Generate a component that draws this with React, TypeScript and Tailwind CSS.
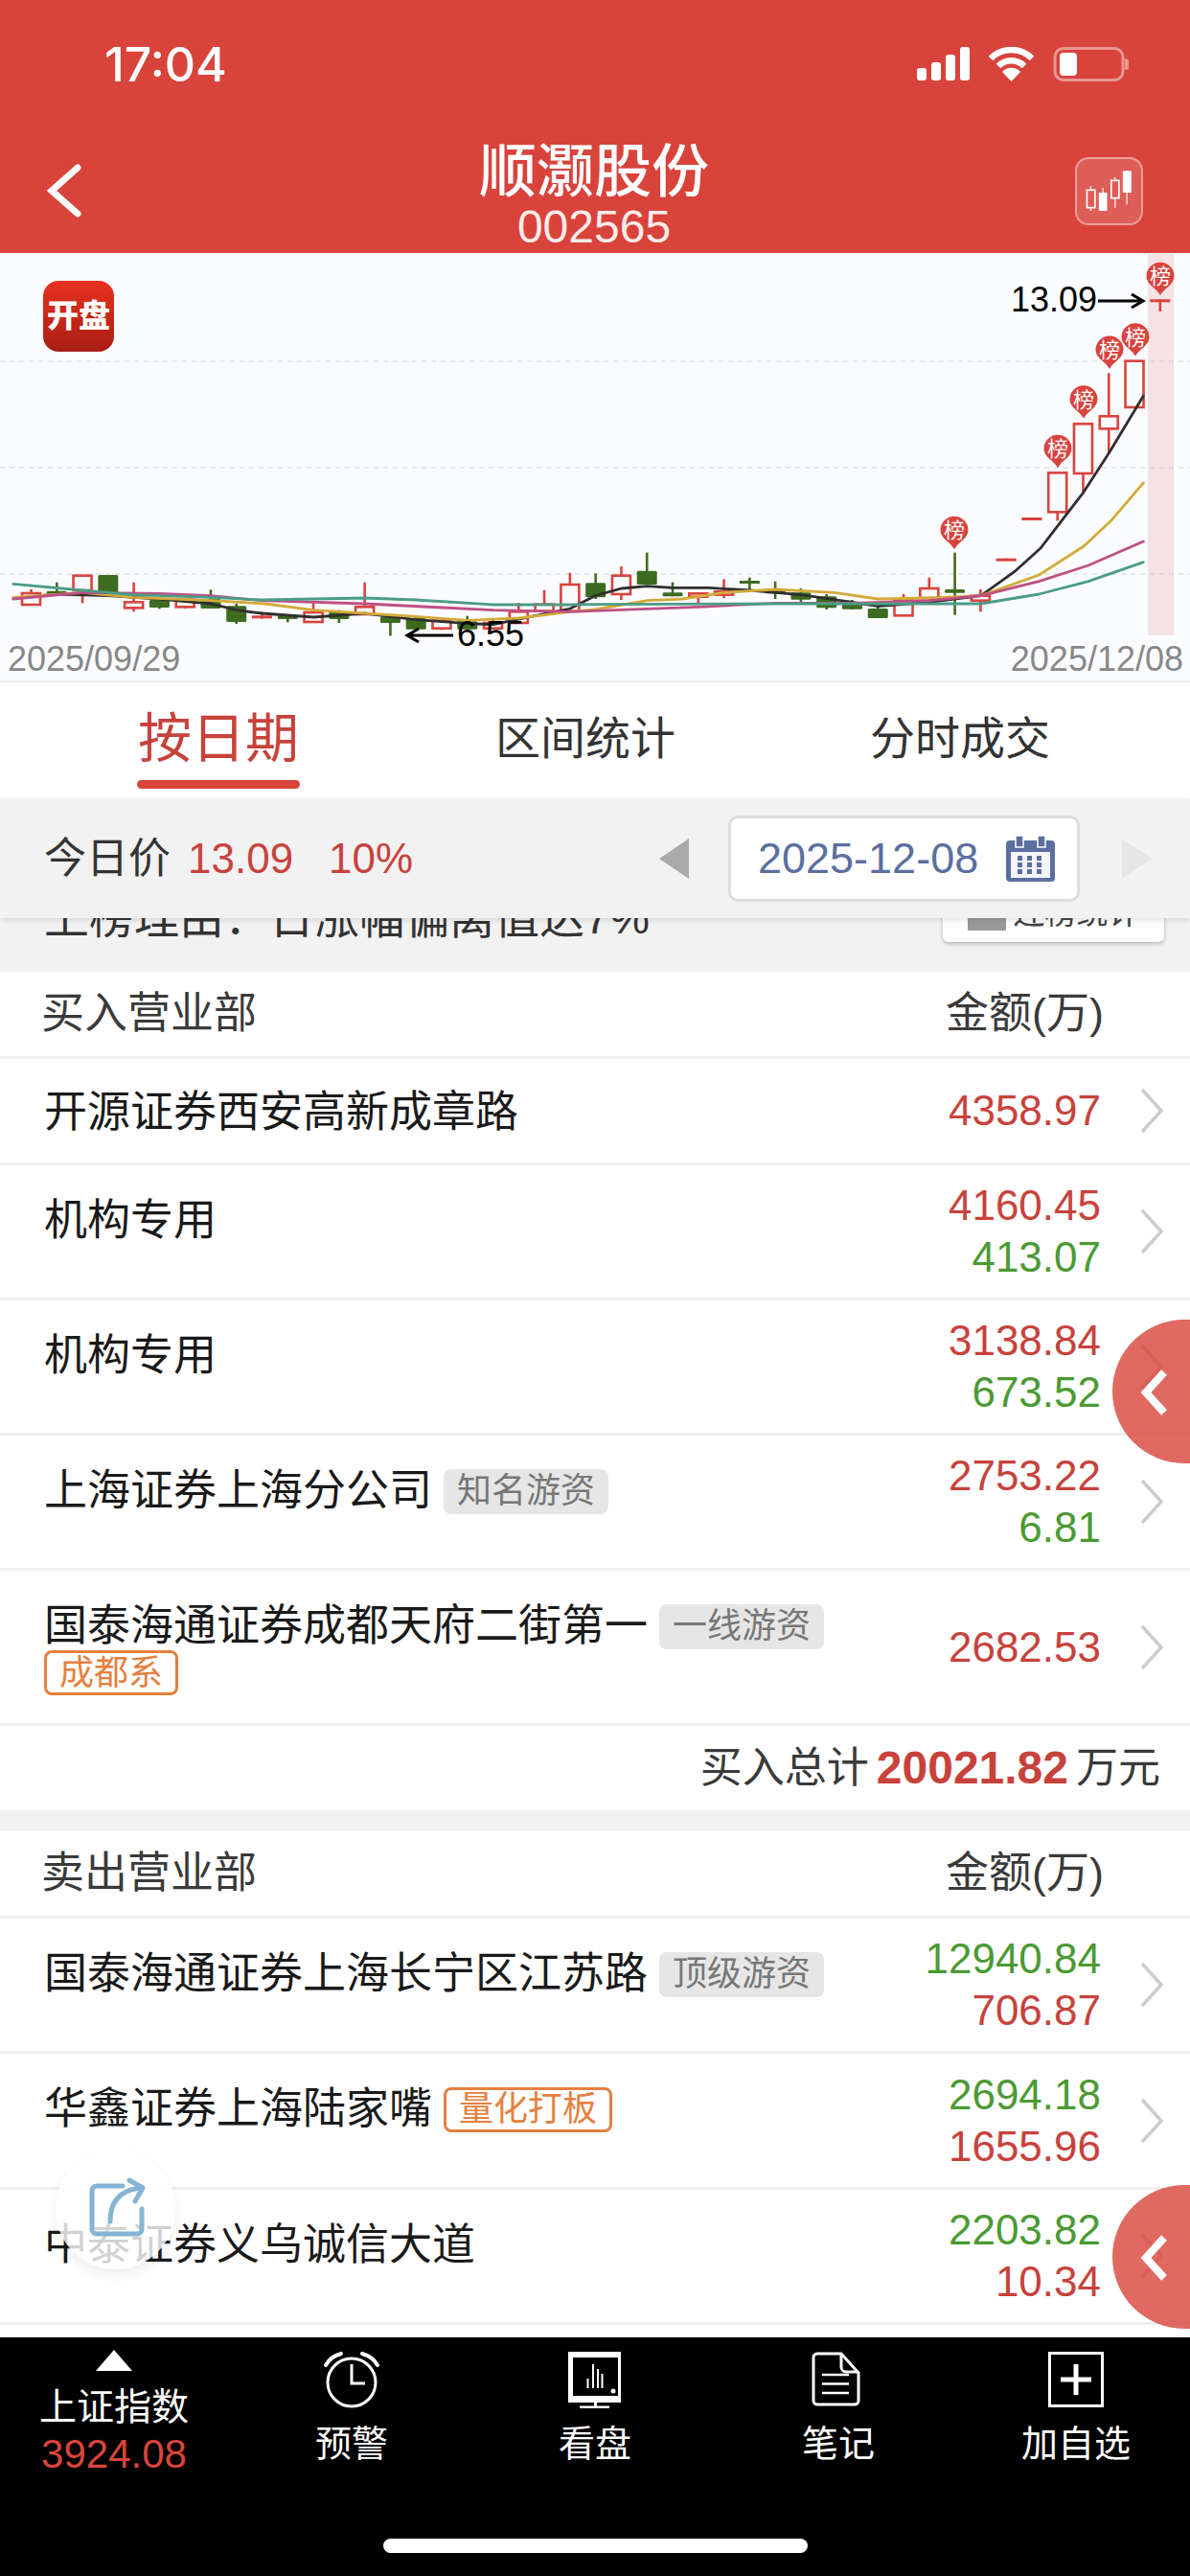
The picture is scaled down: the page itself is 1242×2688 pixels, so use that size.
import type { ReactNode } from 'react'

const RED = '#d9433d'
const GREEN = '#3d6b1f'

// zoomed crop coordinates -> chart coordinates
const lx = (px: number) => px / 2.525
const rx = (px: number) => 621 + px / 2.525
const yy = (py: number) => py / 3 - 4

type Candle = [number, number, number, number, 'r' | 'g']

// body top, body bottom, wick top, wick bottom
const candles: Candle[] = [
  [1077, 1113, 1065, 1115, 'r'],
  [1070, 1080, 1043, 1080, 'g'],
  [1022, 1068, 1022, 1108, 'r'],
  [1020, 1078, 1020, 1083, 'g'],
  [1105, 1123, 1043, 1135, 'r'],
  [1098, 1122, 1098, 1126, 'g'],
  [1097, 1120, 1097, 1125, 'r'],
  [1095, 1125, 1066, 1125, 'g'],
  [1117, 1167, 1110, 1173, 'g'],
  [1147, 1154, 1135, 1157, 'r'],
  [1147, 1158, 1147, 1168, 'g'],
  [1137, 1167, 1108, 1167, 'r'],
  [1135, 1158, 1130, 1170, 'g'],
  [1120, 1143, 1043, 1143, 'r'],
  [1150, 1170, 1145, 1210, 'g'],
  [1155, 1190, 1150, 1190, 'g'],
  [1163, 1187, 1155, 1192, 'r'],
  [1165, 1190, 1148, 1190, 'g'],
  [1170, 1187, 1160, 1190, 'r'],
  [1135, 1170, 1107, 1170, 'r'],
  [1112, 1133, 1067, 1135, 'r'],
  [1050, 1133, 1013, 1133, 'r'],
  [1045, 1090, 1015, 1095, 'g'],
  [1022, 1080, 993, 1098, 'r'],
  [1007, 1050, 950, 1050, 'g'],
  [1075, 1087, 1043, 1087, 'g'],
  [1078, 1088, 1078, 1110, 'r'],
  [1072, 1082, 1033, 1092, 'r'],
  [1038, 1046, 1028, 1072, 'g'],
  [1063, 1078, 1040, 1095, 'g'],
  [1075, 1097, 1062, 1110, 'g'],
  [1087, 1123, 1080, 1128, 'g'],
  [1108, 1127, 1098, 1127, 'g'],
  [1125, 1155, 1115, 1155, 'g'],
  [1097, 1147, 1080, 1147, 'r'],
  [1062, 1092, 1028, 1092, 'r'],
  [1065, 1076, 950, 1145, 'g'],
  [1085, 1100, 1065, 1135, 'r'],
  [968, 974, 968, 974, 'r'],
  [840, 846, 840, 846, 'r'],
  [700, 823, 700, 850, 'r'],
  [547, 702, 547, 762, 'r'],
  [523, 562, 388, 640, 'r'],
  [350, 495, 350, 495, 'r'],
  [157, 163, 157, 195, 'r'],
]

const toPoints = (left: number[][], right: number[][]) =>
  [...left.map(([x, y]) => `${lx(x)},${yy(y)}`), ...right.map(([x, y]) => `${rx(x)},${yy(y)}`)].join(' ')

const lines = [
  {
    color: '#2f2f2f',
    points: toPoints(
      [[35, 1093], [150, 1080], [286, 1085], [420, 1095], [556, 1110], [624, 1130], [690, 1140], [826, 1152], [962, 1140], [1097, 1160], [1233, 1172], [1300, 1175], [1400, 1150], [1503, 1125]],
      [[0, 1085], [70, 1062], [138, 1055], [205, 1060], [300, 1060], [408, 1068], [543, 1082], [678, 1105], [746, 1118], [881, 1105], [1017, 1085], [1105, 1010], [1175, 935], [1288, 760], [1356, 635], [1445, 460]],
    ),
  },
  {
    color: '#d4ab3a',
    points: toPoints(
      [[35, 1090], [218, 1075], [350, 1090], [556, 1100], [700, 1110], [826, 1130], [962, 1140], [1097, 1150], [1233, 1162], [1367, 1155], [1503, 1135]],
      [[0, 1128], [138, 1100], [230, 1095], [340, 1075], [475, 1065], [630, 1075], [746, 1095], [881, 1092], [1017, 1085], [1170, 1020], [1288, 930], [1360, 850], [1445, 732]],
    ),
  },
  {
    color: '#bf4f86',
    points: toPoints(
      [[35, 1095], [218, 1075], [420, 1078], [556, 1085], [690, 1100], [962, 1110], [1165, 1122], [1300, 1130], [1503, 1135]],
      [[0, 1132], [273, 1120], [475, 1108], [678, 1108], [881, 1100], [1017, 1085], [1170, 1040], [1300, 990], [1445, 915]],
    ),
  },
  {
    color: '#4b9c86',
    points: toPoints(
      [[35, 1048], [218, 1068], [350, 1082], [556, 1090], [690, 1098], [962, 1092], [1097, 1098], [1300, 1113], [1503, 1113]],
      [[0, 1112], [475, 1110], [1017, 1110], [1170, 1080], [1300, 1040], [1445, 980]],
    ),
  },
]

// x centre, tip y
const pins = [
  [1211, yy(145)],
  [1185, yy(335)],
  [1158, yy(375)],
  [1131, yy(530)],
  [1104, yy(685)],
  [996, yy(940)],
]

function Chart() {
  return (
    <svg viewBox="0 0 1242 404" className="block h-[404px] w-[1242px] overflow-visible">
      <rect x="1198" y="1" width="27" height="398" fill="#f5e2e4" />
      {[113, 224, 335].map((y) => (
        <line key={y} x1="0" x2="1242" y1={y} y2={y} stroke="#cfd0d4" strokeWidth="1" strokeDasharray="5 5" />
      ))}
      {candles.map(([top, bottom, wickTop, wickBottom, kind], i) => {
        const x = 32.5 + i * 26.78
        const color = kind === 'r' ? RED : GREEN
        const flat = bottom - top < 10
        return (
          <g key={i}>
            <line x1={x} x2={x} y1={yy(wickTop)} y2={yy(wickBottom)} stroke={color} strokeWidth="2.6" />
            {flat ? (
              <rect x={x - 10.5} y={yy(top)} width="21" height="3" fill={color} />
            ) : kind === 'r' ? (
              <rect x={x - 9.5} y={yy(top)} width="19" height={(bottom - top) / 3} fill="#fbfcff" stroke={color} strokeWidth="2.6" />
            ) : (
              <rect x={x - 10.5} y={yy(top)} width="21" height={(bottom - top) / 3} rx="1.5" fill={color} />
            )}
          </g>
        )
      })}
      {lines.map((l) => (
        <polyline key={l.color} points={l.points} fill="none" stroke={l.color} strokeWidth="2.8" strokeLinejoin="round" strokeLinecap="round" />
      ))}
      {pins.map(([x, tip]) => (
        <g key={x}>
          <path
            d={`M${x} ${tip} C${x - 4} ${tip - 8} ${x - 14.5} ${tip - 11} ${x - 14.5} ${tip - 20} A14.5 14.5 0 1 1 ${x + 14.5} ${tip - 20} C${x + 14.5} ${tip - 11} ${x + 4} ${tip - 8} ${x} ${tip} Z`}
            fill={RED}
          />
          <text x={x} y={tip - 12} textAnchor="middle" fontSize="22" fill="#fff">
            榜
          </text>
        </g>
      ))}
      <text x="1055" y="61" fontSize="36" fill="#000">
        13.09
      </text>
      <path d="M1146 50 H1192 M1181 43 L1193 50 L1181 57" fill="none" stroke="#000" strokeWidth="3" />
      <path d="M473 399 H426 M437 392 L425 399 L437 406" fill="none" stroke="#000" strokeWidth="3" />
      <text x="477" y="410" fontSize="36" fill="#000">
        6.55
      </text>
    </svg>
  )
}

function Chevron() {
  return (
    <svg width="26" height="48" viewBox="0 0 26 48" className="shrink-0">
      <path d="M3 2 L23 24 L3 46" fill="none" stroke="#cdcdcd" strokeWidth="3.6" />
    </svg>
  )
}

function Tag({ children, orange }: { children: ReactNode; orange?: boolean }) {
  return orange ? (
    <span className="flex h-[47px] items-center whitespace-nowrap rounded-lg border-[3px] border-[#e5803e] px-[13px] text-[36px] text-[#e5803e]">
      {children}
    </span>
  ) : (
    <span className="flex h-[47px] items-center whitespace-nowrap rounded-lg bg-[#e6e6e6] px-[14px] text-[36px] text-[#777777]">
      {children}
    </span>
  )
}

function Row({
  name,
  tags,
  values,
  height,
  compact,
}: {
  name: string
  tags?: ReactNode
  values: [string, string][]
  height: string
  compact?: boolean
}) {
  return (
    <div className={`flex border-b-[3px] border-[#efefef] pl-[46px] pr-[27px] ${height}`}>
      <div className={`flex min-w-0 flex-1 flex-wrap content-start items-center gap-x-[12px] gap-y-[1px] pr-[30px] ${compact ? 'pt-[32px]' : 'pt-[34px]'}`}>
        <span className="whitespace-nowrap text-[45px] leading-[48px] text-[#1a1a1a]">{name}</span>
        {tags}
      </div>
      <div className="flex flex-col items-end justify-center text-[44px] leading-[54px]">
        {values.map(([v, c]) => (
          <span key={v} className={c === 'r' ? 'text-[#c8423c]' : 'text-[#4b9a33]'}>
            {v}
          </span>
        ))}
      </div>
      <div className="ml-[40px] flex items-center">
        <Chevron />
      </div>
    </div>
  )
}

function SectionHead({ title }: { title: string }) {
  return (
    <div className="flex h-[91px] items-center justify-between border-b-[3px] border-[#efefef] pl-[43px] pr-[90px] text-[45px] text-[#3a3a3a]">
      <span>{title}</span>
      <span>金额(万)</span>
    </div>
  )
}

function RedTab({ top }: { top: string }) {
  return (
    <div className={`absolute left-[1161px] flex h-[150px] w-[152px] rounded-full bg-[#d8433b]/80 ${top}`}>
      <svg width="30" height="48" viewBox="0 0 30 48" className="ml-[28px] mt-[52px]">
        <path d="M26 3 L7 24 L26 45" fill="none" stroke="#fff" strokeWidth="8" />
      </svg>
    </div>
  )
}

function NavItem({ width, label, children }: { width: string; label: string; children: ReactNode }) {
  return (
    <div className={`flex flex-col items-center pt-[14px] ${width}`}>
      <div className="h-[60px]">{children}</div>
      <span className="mt-[15px] text-[38px] leading-[44px] text-white">{label}</span>
    </div>
  )
}

export default function App() {
  return (
    <div className="relative flex h-[2688px] w-[1242px] flex-col overflow-hidden bg-white font-['Liberation_Sans','Noto_Sans_CJK_SC',sans-serif]">
      {/* header */}
      <header className="h-[264px] shrink-0 bg-[#d8433b] text-white">
        <div className="flex h-[134px] items-center pl-[109px] pr-[64px]">
          <span className="font-['Inter'] text-[50px] font-medium">17:04</span>
          <svg width="221" height="36" viewBox="0 0 221 36" className="ml-auto">
            <rect x="0" y="22" width="10" height="13" rx="3" fill="#fff" />
            <rect x="15" y="16" width="10" height="19" rx="3" fill="#fff" />
            <rect x="30" y="8" width="10" height="27" rx="3" fill="#fff" />
            <rect x="45" y="0" width="10" height="35" rx="3" fill="#fff" />
            <path d="M77 12 A30 30 0 0 1 120 12" fill="none" stroke="#fff" strokeWidth="6.5" />
            <path d="M85 20 A19 19 0 0 1 112 20" fill="none" stroke="#fff" strokeWidth="6.5" />
            <path d="M89 26 A13 13 0 0 1 108 26 L98.5 36 Z" fill="#fff" />
            <rect x="144" y="1.5" width="71" height="33" rx="9" fill="none" stroke="#fff" strokeOpacity="0.45" strokeWidth="3" />
            <rect x="149" y="6" width="18" height="24" rx="4" fill="#fff" />
            <path d="M217 12 A6 6 0 0 1 217 24 Z" fill="#fff" fillOpacity="0.45" />
          </svg>
        </div>
        <div className="flex h-[130px] items-center justify-between px-[49px]">
          <div className="w-[69px]">
            <svg width="36" height="56" viewBox="0 0 36 56">
              <path d="M32 4 L5 28 L32 52" fill="none" stroke="#fff" strokeWidth="7" strokeLinecap="round" />
            </svg>
          </div>
          <div className="mt-[14px] flex flex-col items-center self-start">
            <span className="text-[60px] font-medium leading-[64px]">顺灏股份</span>
            <span className="mt-[1px] text-[48px] leading-[48px] text-white/90">002565</span>
          </div>
          <div className="flex h-[71px] w-[71px] items-center justify-center rounded-[14px] border-2 border-white/40 bg-white/15">
            <svg width="71" height="71" viewBox="38 37 212 213" className="shrink-0">
              <path d="M87 127 V205 M125 133 V205 M163 100 V195 M200 80 V185" stroke="#fff" strokeOpacity="0.85" strokeWidth="4" />
              <rect x="75" y="140" width="25" height="55" fill="#e15b55" stroke="#fff" strokeWidth="5" />
              <rect x="112" y="148" width="26" height="57" fill="#fff" />
              <rect x="151" y="110" width="24" height="55" fill="#e15b55" stroke="#fff" strokeWidth="5" />
              <rect x="187" y="80" width="27" height="68" fill="#fff" />
            </svg>
          </div>
        </div>
      </header>

      {/* chart */}
      <section className="relative h-[448px] shrink-0 border-b-2 border-[#ececec] bg-[#fbfcff]">
        <Chart />
        <div className="flex justify-between pl-[8px] pr-[7px] text-[36px] leading-[40px] text-[#888888]">
          <span>2025/09/29</span>
          <span>2025/12/08</span>
        </div>
        <div className="absolute left-[45px] top-[29px] flex h-[74px] w-[74px] items-center justify-center rounded-[16px] bg-gradient-to-b from-[#e8321f] to-[#a81e14] text-[33px] font-black text-white">
          开盘
        </div>
      </section>

      {/* tabs */}
      <div className="flex h-[121px] shrink-0 text-[47px] text-[#333333]">
        <div className="flex w-[456px] flex-col items-center pt-[28px]">
          <span className="text-[56px] leading-[62px] text-[#c8423c]">按日期</span>
          <div className="mt-[12px] h-[9px] w-[170px] rounded-full bg-[#d8433b]" />
        </div>
        <div className="flex w-[310px] flex-col items-center pt-[28px]">
          <span className="leading-[62px]">区间统计</span>
        </div>
        <div className="flex w-[472px] flex-col items-center pt-[28px]">
          <span className="leading-[62px]">分时成交</span>
        </div>
      </div>

      {/* date bar */}
      <div className="relative z-10 flex h-[125px] shrink-0 items-center bg-[#f2f2f2] pl-[46px] pr-[40px] text-[44px] shadow-[0_2px_6px_rgba(0,0,0,0.12)]">
        <span className="text-[#333333]">今日价</span>
        <span className="ml-[18px] text-[#c8423c]">13.09</span>
        <span className="ml-[37px] text-[#c8423c]">10%</span>
        <svg width="31" height="42" viewBox="0 0 31 42" className="ml-auto">
          <path d="M0 21 L31 0 V42 Z" fill="#aaaaaa" />
        </svg>
        <div className="ml-[41px] flex h-[90px] w-[367px] items-center justify-between rounded-[10px] border-[3px] border-[#dddddd] bg-white pl-[28px] pr-[23px] text-[#5a6f9f]">
          <span className="text-[45px]">2025-12-08</span>
          <svg width="51" height="48" viewBox="0 0 51 48">
            <rect x="0" y="5" width="51" height="43" rx="4" fill="#5a6f9f" />
            <rect x="5" y="17" width="41" height="27" fill="#f4f5f9" />
            <rect x="10" y="0" width="8" height="12" fill="#5a6f9f" stroke="#fff" strokeWidth="1.5" />
            <rect x="33" y="0" width="8" height="12" fill="#5a6f9f" stroke="#fff" strokeWidth="1.5" />
            {[12, 22, 32].map((x) =>
              [21, 28, 35].map((y) => <rect key={`${x}-${y}`} x={x} y={y} width="5" height="5" fill="#5a6f9f" />),
            )}
          </svg>
        </div>
        <svg width="31" height="42" viewBox="0 0 31 42" className="ml-[44px]">
          <path d="M31 21 L0 0 V42 Z" fill="#e6e6e6" />
        </svg>
      </div>

      {/* list */}
      <div className="flex-1 overflow-hidden">
        <div className="h-[56px] overflow-hidden bg-[#f2f2f2]">
          <div className="-mt-[35px] flex items-start justify-between pl-[46px] pr-[27px]">
            <span className="mt-[11px] text-[47px] leading-[48px] text-[#333333]">上榜理由：日涨幅偏离值达7%</span>
            <div className="flex h-[60px] w-[231px] items-center justify-center gap-[8px] rounded-b-md bg-white text-[33px] text-[#444444] shadow-[0_2px_4px_rgba(0,0,0,0.25)]">
              <svg width="40" height="36" viewBox="0 0 40 36">
                <rect width="40" height="36" fill="#999999" />
              </svg>
              <span>连榜统计</span>
            </div>
          </div>
        </div>

        <SectionHead title="买入营业部" />
        <Row compact height="h-[111px]" name="开源证券西安高新成章路" values={[['4358.97', 'r']]} />
        <Row height="h-[141px]" name="机构专用" values={[['4160.45', 'r'], ['413.07', 'g']]} />
        <Row height="h-[141px]" name="机构专用" values={[['3138.84', 'r'], ['673.52', 'g']]} />
        <Row height="h-[141px]" name="上海证券上海分公司" tags={<Tag>知名游资</Tag>} values={[['2753.22', 'r'], ['6.81', 'g']]} />
        <Row
          height="h-[162px]"
          name="国泰海通证券成都天府二街第一"
          tags={
            <>
              <Tag>一线游资</Tag>
              <Tag orange>成都系</Tag>
            </>
          }
          values={[['2682.53', 'r']]}
        />
        <div className="flex h-[88px] items-center justify-end gap-[8px] pr-[31px] text-[44px] text-[#3a3a3a]">
          <span>买入总计</span>
          <span className="text-[48px] font-bold text-[#c8423c]">20021.82</span>
          <span>万元</span>
        </div>
        <div className="h-[22px] bg-[#f2f2f2]" />

        <SectionHead title="卖出营业部" />
        <Row height="h-[141px]" name="国泰海通证券上海长宁区江苏路" tags={<Tag>顶级游资</Tag>} values={[['12940.84', 'g'], ['706.87', 'r']]} />
        <Row height="h-[142px]" name="华鑫证券上海陆家嘴" tags={<Tag orange>量化打板</Tag>} values={[['2694.18', 'g'], ['1655.96', 'r']]} />
        <Row height="h-[141px]" name="中泰证券义乌诚信大道" values={[['2203.82', 'g'], ['10.34', 'r']]} />
      </div>

      {/* bottom bar */}
      <nav className="flex h-[249px] shrink-0 flex-col bg-black">
        <div className="flex">
          <div className="flex w-[238px] flex-col items-center pt-[13px]">
            <svg width="38" height="22" viewBox="0 0 38 22">
              <path d="M19 0 L38 22 H0 Z" fill="#fff" />
            </svg>
            <span className="mt-[14px] text-[39px] leading-[48px] text-white">上证指数</span>
            <span className="mt-[1px] text-[42px] leading-[48px] text-[#d9443c]">3924.08</span>
          </div>
          <NavItem width="w-[258px]" label="预警">
            <svg width="60" height="60" viewBox="0 0 60 60" fill="none" stroke="#fff" strokeWidth="3">
              <circle cx="30" cy="33" r="25" />
              <path d="M30 14 V34 H44" />
              <path d="M3 15 Q8 6 19 3 M41 3 Q52 6 57 15" strokeWidth="4" strokeLinecap="round" />
            </svg>
          </NavItem>
          <NavItem width="w-[250px]" label="看盘">
            <svg width="60" height="60" viewBox="0 0 60 60" fill="none">
              <path fillRule="evenodd" clipRule="evenodd" d="M2 1 H57 V54 H2 Z M7 7 V47 H54 V7 Z" fill="#fff" />
              <path d="M30.5 54 V59 M14 59 H45" stroke="#fff" strokeWidth="3" />
              <path d="M22.5 29 V39 M28 14 V39 M33 19 V39 M37.5 24 V39" stroke="#fff" strokeWidth="2" />
              <circle cx="49" cy="42" r="2.5" fill="#fff" />
            </svg>
          </NavItem>
          <NavItem width="w-[258px]" label="笔记">
            <svg width="60" height="60" viewBox="0 0 60 60" fill="none" stroke="#fff" strokeWidth="3">
              <path d="M8 3 H33 L51 23 V52 A4 4 0 0 1 47 56 H8 A4 4 0 0 1 4 52 V7 A4 4 0 0 1 8 3 Z" />
              <path d="M33 3 V17 A5 5 0 0 0 38 22 H51" />
              <path d="M13 25 H41 M13 34.5 H41 M13 44 H41" strokeWidth="2.6" />
            </svg>
          </NavItem>
          <NavItem width="w-[238px]" label="加自选">
            <svg width="60" height="60" viewBox="0 0 60 60" fill="none" stroke="#fff">
              <rect x="2.5" y="2.5" width="55" height="55" strokeWidth="3" />
              <path d="M30 14 V46 M14 30 H46" strokeWidth="5" />
            </svg>
          </NavItem>
        </div>
        <div className="mx-auto mb-[24px] mt-auto h-[15px] w-[443px] rounded-full bg-white" />
      </nav>

      {/* floating buttons */}
      <RedTab top="top-[1377px]" />
      <RedTab top="top-[2280px]" />
      <div className="absolute left-[58px] top-[2243px] h-[125px] w-[125px] rounded-full bg-white/80 shadow-[0_6px_14px_rgba(0,0,0,0.07)]">
        <svg width="125" height="125" viewBox="0 0 125 125" fill="none" stroke="#86b4d4" strokeWidth="5" strokeLinecap="round" strokeLinejoin="round">
          <path d="M70 38 H43 A5 5 0 0 0 38 43 V83 A5 5 0 0 0 43 88 H85 A5 5 0 0 0 90 83 V62" />
          <path d="M57 75 C57 52 70 42 89 40" />
          <path d="M77 32 L91 40 L83 54" />
        </svg>
      </div>
    </div>
  )
}
